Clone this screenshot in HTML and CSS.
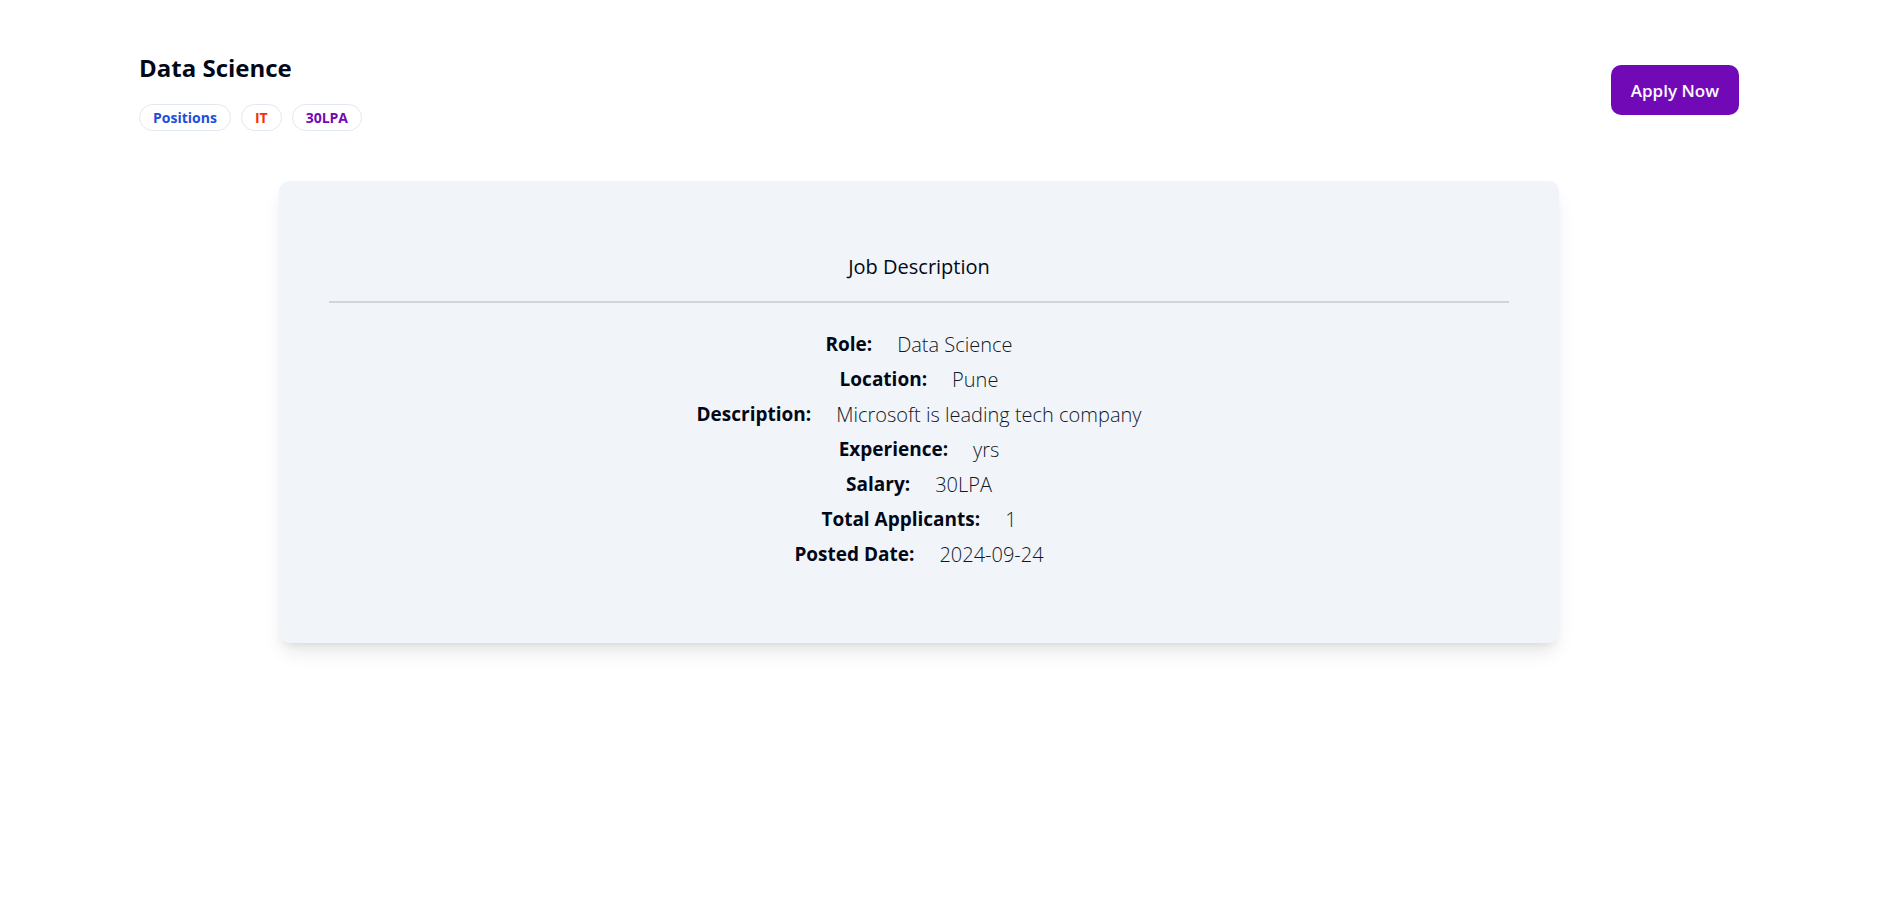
FILE: index.html
```html
<!DOCTYPE html>
<html lang="en">
<head>
<meta charset="utf-8">
<meta name="viewport" content="width=device-width, initial-scale=1">
<title>Data Science</title>
<link rel="stylesheet" href="styles.css">
</head>
<body>
<main class="page">
  <header class="job-header">
    <div class="job-summary">
      <h1 class="job-title">Data Science</h1>
      <div class="badges">
        <span class="badge badge-blue">Positions</span>
        <span class="badge badge-red">IT</span>
        <span class="badge badge-purple">30LPA</span>
      </div>
    </div>
    <button class="apply" type="button">Apply Now</button>
  </header>
  <section class="card">
    <h2 class="card-title">Job Description</h2>
    <dl class="details">
      <div class="row"><dt>Role:</dt><dd>Data Science</dd></div>
      <div class="row"><dt>Location:</dt><dd>Pune</dd></div>
      <div class="row"><dt>Description:</dt><dd>Microsoft is leading tech company</dd></div>
      <div class="row"><dt>Experience:</dt><dd>yrs</dd></div>
      <div class="row"><dt>Salary:</dt><dd>30LPA</dd></div>
      <div class="row"><dt>Total Applicants:</dt><dd>1</dd></div>
      <div class="row"><dt>Posted Date:</dt><dd>2024-09-24</dd></div>
    </dl>
  </section>
</main>
</body>
</html>
```
FILE: styles.css
```css
* {
  box-sizing: border-box;
}

body {
  margin: 0;
  background: #fff;
  color: #020817;
  font-family: "Segoe UI", "Open Sans", "Noto Sans", sans-serif;
}

.page {
  max-width: 1600px;
  margin: 49px auto;
}

.job-header {
  display: flex;
  align-items: center;
  justify-content: space-between;
}

.job-title {
  margin: 0;
  font-size: 24px;
  line-height: 38px;
  font-weight: 700;
}

.badges {
  display: flex;
  gap: 10px;
  margin-top: 17px;
}

.badge {
  padding: 0 13px;
  border: 1px solid #e2e8f0;
  border-radius: 14px;
  font-size: 14px;
  line-height: 25px;
  font-weight: 700;
}

.badge-blue {
  color: #1d4ed8;
}

.badge-red {
  color: #f83002;
}

.badge-purple {
  color: #7209b7;
}

.apply {
  height: 50px;
  padding: 0 20px;
  border: 0;
  border-radius: 10px;
  background: #7209b7;
  color: #f8fafc;
  font-family: inherit;
  font-size: 17px;
  font-weight: 600;
  cursor: pointer;
}

.card {
  width: 80%;
  margin: 50px 0 0 140px;
  padding: 71px 50px;
  border-radius: 10px;
  background: #f1f5f9;
  box-shadow: 0 12px 19px -4px rgb(0 0 0 / 0.1), 0 5px 8px -5px rgb(0 0 0 / 0.1);
}

.card-title {
  margin: 0 0 24px;
  padding-bottom: 19px;
  border-bottom: 2px solid #d1d5db;
  font-size: 20px;
  line-height: 30px;
  font-weight: 500;
  text-align: center;
}

.details {
  margin: 0;
}

.row {
  display: flex;
  align-items: center;
  justify-content: center;
  gap: 25px;
  line-height: 35px;
}

.row dt {
  font-size: 19px;
  font-weight: 700;
}

.row dd {
  margin: 0;
  color: #111827;
  font-size: 20px;
  font-weight: 300;
}
```
